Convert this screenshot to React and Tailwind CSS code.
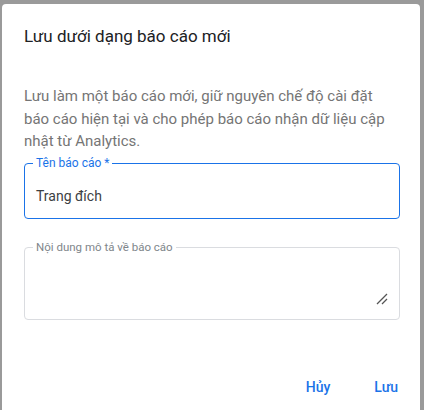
import React from "react";

const App = () => {
  return (
    <div
      className="h-[410px] w-[424px] overflow-hidden bg-[#9a9a9a] pl-[2px] pt-[4px]"
      style={{ fontFamily: "Roboto, 'Noto Sans', sans-serif" }}
    >
      <div className="flex h-[420px] w-[418px] flex-col rounded-t-[4px] bg-white pl-[22px] pr-[20px]">
        {/* Title */}
        <h2 className="pt-[20px] text-[17px] leading-[24px] text-[#202124]">
          Lưu dưới dạng báo cáo mới
        </h2>

        {/* Description */}
        <p className="mt-[37px] pr-[4px] text-[15px] leading-[22.5px] text-[#757575]">
          Lưu làm một báo cáo mới, giữ nguyên chế độ cài đặt báo cáo hiện tại và
          cho phép báo cáo nhận dữ liệu cập nhật từ Analytics.
        </p>

        {/* Report name */}
        <div className="relative mt-[10px] h-[56px] rounded-[4px] border-[1.5px] border-[#1a73e8]">
          <span className="absolute -top-[8px] left-[8px] bg-white px-[3px] text-[12px] leading-[14px] text-[#1a73e8]">
            Tên báo cáo *
          </span>
          <div className="px-[11px] pt-[23px] text-[14px] leading-[18px] text-[#3c4043]">
            Trang đích
          </div>
        </div>

        {/* Description field */}
        <div className="relative mt-[28px] h-[73px] rounded-[4px] border border-[#dadce0]">
          <span className="absolute -top-[7px] left-[8px] bg-white px-[3px] text-[11.5px] leading-[13px] text-[#80868b]">
            Nội dung mô tả về báo cáo
          </span>
          <svg
            className="absolute bottom-[14px] right-[11px]"
            width="12"
            height="12"
            viewBox="0 0 12 12"
          >
            <path d="M1 11 L11 1 M6 11 L11 6" stroke="#555" strokeWidth="1.3" />
          </svg>
        </div>

        {/* Actions */}
        <div className="mt-[58px] flex justify-end gap-[44px] pr-[2px]">
          <button className="text-[14px] font-medium leading-[18px] text-[#1a73e8]">Hủy</button>
          <button className="text-[14px] font-medium leading-[18px] text-[#1a73e8]">Lưu</button>
        </div>
      </div>
    </div>
  );
};

export default App;
